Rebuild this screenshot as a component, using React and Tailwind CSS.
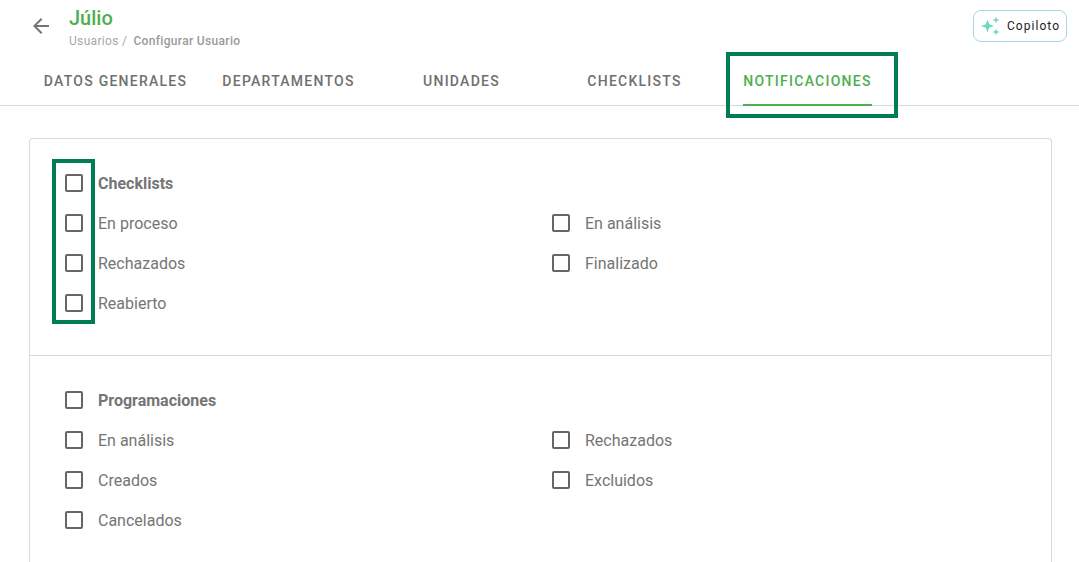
import React from "react";

const Box = ({ children, bold }) => (
  <label className="flex h-10 items-center">
    <span className="h-[18px] w-[18px] rounded-[2px] border-2 border-[#666666]" />
    <span className={`ml-[15px] pt-[2px] text-[16px] text-[#757575] ${bold ? "font-bold" : "font-normal"}`}>{children}</span>
  </label>
);

const Section = ({ title, left, right, cls }) => (
  <div className={cls}>
    <Box bold>{title}</Box>
    <div className="grid grid-cols-[487px_1fr]">
      <div>{left.map((l) => <Box key={l}>{l}</Box>)}</div>
      <div>{right.map((l) => <Box key={l}>{l}</Box>)}</div>
    </div>
  </div>
);

const tabs = ["DATOS GENERALES", "DEPARTAMENTOS", "UNIDADES", "CHECKLISTS", "NOTIFICACIONES"];

const Sparkle = () => (
  <svg width="22" height="22" viewBox="0 0 22 22" fill="#6fd8c0">
    <path d="M7.5 4.5 L9.2 9.3 L14 11 L9.2 12.7 L7.5 17.5 L5.8 12.7 L1 11 L5.8 9.3 Z" />
    <path d="M16 1.5 L16.9 4.1 L19.5 5 L16.9 5.9 L16 8.5 L15.1 5.9 L12.5 5 L15.1 4.1 Z" />
    <path d="M16 13.5 L16.9 16.1 L19.5 17 L16.9 17.9 L16 20.5 L15.1 17.9 L12.5 17 L15.1 16.1 Z" />
  </svg>
);

export default function App() {
  return (
    <div className="relative h-[562px] w-[1079px] overflow-hidden bg-white font-['Roboto',sans-serif]">
      <header className="flex h-[60px] items-start justify-between pr-3">
        <div className="flex items-start pl-[29px] pt-[6px]">
          <svg className="mt-[8px] h-6 w-6" viewBox="0 0 24 24" fill="#757575">
            <path d="M20 11H7.83l5.59-5.59L12 4l-8 8 8 8 1.41-1.41L7.83 13H20v-2z" />
          </svg>
          <div className="ml-[16px]">
            <div className="text-[20px] font-medium leading-[24px] text-[#4caf50]">Júlio</div>
            <div className="mt-[3px] flex text-[12px] leading-[16px] tracking-[0.33px] text-[#a8a8a8]">
              <span>Usuarios /</span>
              <span className="ml-[6px] font-medium text-[#9a9a9a]">Configurar Usuario</span>
            </div>
          </div>
        </div>
        <button className="mt-[10px] flex h-[32px] w-[94px] items-center rounded-[8px] border border-[#a5d8e6] pl-[6px] text-[12px] font-normal tracking-[1.05px] text-[#222222]">
          <Sparkle />
          <span className="ml-[5px]">Copiloto</span>
        </button>
      </header>

      <nav className="flex h-[46px] border-b border-[#d9d9d9] pl-[29px]">
        {tabs.map((t, i) => (
          <div key={t} className="flex w-[173px] justify-center">
            <div
              className={`flex h-[46px] items-center border-b-2 pb-[1px] text-[14px] font-medium tracking-[1.25px] ${
                i === 4 ? "border-[#4caf50] text-[#4caf50]" : "border-transparent text-[#707070]"
              }`}
            >
              {t}
            </div>
          </div>
        ))}
      </nav>

      <main className="ml-[29px] mt-[32px] w-[1023px] rounded-t-[4px] border border-b-0 border-[#d9d9d9]">
        <Section
          cls="border-b border-[#d9d9d9] pb-[32px] pl-[35px] pt-[24px]"
          title="Checklists"
          left={["En proceso", "Rechazados", "Reabierto"]}
          right={["En análisis", "Finalizado"]}
        />
        <Section
          cls="pb-[32px] pl-[35px] pt-[24px]"
          title="Programaciones"
          left={["En análisis", "Creados", "Cancelados"]}
          right={["Rechazados", "Excluidos"]}
        />
      </main>

      <div className="absolute left-[726px] top-[52px] h-[66px] w-[172px] border-4 border-[#007e52]" />
      <div className="absolute left-[52px] top-[159px] h-[165px] w-[43px] border-4 border-[#007e52]" />
    </div>
  );
}
